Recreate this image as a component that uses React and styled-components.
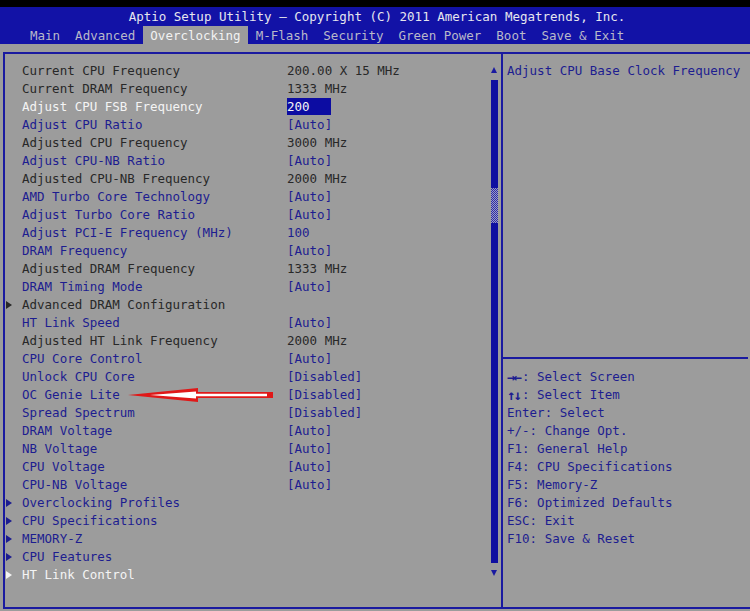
import React from 'react';
import styled, { createGlobalStyle } from 'styled-components';

const GlobalStyle = createGlobalStyle`
  html, body {
    margin: 0;
    padding: 0;
    background: #9c9c9c;
  }
  body {
    font-family: "DejaVu Sans Mono", "Liberation Mono", monospace;
    font-size: 12.5px;
  }
`;

const BLUE = '#1d1d90';
const DARK = '#282828';
const FRAME = '#1a1aa0';

const Screen = styled.div`
  width: 750px;
  height: 611px;
  background: #9c9c9c;
  display: flex;
  flex-direction: column;
  overflow: hidden;
`;

const TopStrip = styled.div`
  height: 7px;
  background: #000;
`;

const Header = styled.div`
  background: #1212a6;
  display: flex;
  flex-direction: column;
`;

const Title = styled.div`
  height: 19px;
  line-height: 20px;
  text-align: center;
  color: #e6e6ee;
  padding-left: 4px;
`;

const Tabs = styled.div`
  display: flex;
  height: 18px;
  padding-left: 22.5px;
`;

const Tab = styled.div`
  padding: 0 7.5px;
  line-height: 19px;
  color: ${p => (p.active ? '#f2f2f2' : '#b9b9c9')};
  background: ${p => (p.active ? '#9c9c9c' : 'transparent')};
  white-space: pre;
`;

const Body = styled.div`
  flex: 1;
  padding: 8px 0 2px 3px;
  display: flex;
`;

const Frame = styled.div`
  flex: 1;
  display: flex;
  border: 2px solid ${FRAME};
  border-right: none;
`;

const LeftPane = styled.div`
  width: 496px;
  display: flex;
`;

const List = styled.div`
  flex: 1;
  padding-top: 8px;
  display: flex;
  flex-direction: column;
`;

const Row = styled.div`
  position: relative;
  display: flex;
  height: 18px;
  line-height: 18px;
  white-space: pre;
`;

const Marker = styled.div`
  width: 17px;
  display: flex;
  align-items: center;
  padding-left: 1px;
  box-sizing: border-box;
`;

const Triangle = styled.span`
  width: 0;
  height: 0;
  border-left: 6px solid ${p => p.color};
  border-top: 4px solid transparent;
  border-bottom: 4px solid transparent;
`;

const Label = styled.div`
  width: 265px;
  color: ${p => p.color};
`;

const Value = styled.div`
  color: ${p => (p.editing ? '#f4f4f4' : p.color)};
  background: ${p => (p.editing ? '#0c0ca2' : 'transparent')};
  width: ${p => (p.editing ? '44px' : 'auto')};
  height: 17px;
  line-height: 17px;
`;

const Pointer = styled.svg`
  position: absolute;
  left: 123px;
  top: 1px;
`;

const Scroll = styled.div`
  width: 8px;
  margin: 13px 3px 0 0;
  display: flex;
  flex-direction: column;
  align-items: center;
`;

const ArrowUp = styled.span`
  width: 0;
  height: 0;
  border-bottom: 6px solid ${FRAME};
  border-left: 3.5px solid transparent;
  border-right: 3.5px solid transparent;
`;

const ArrowDown = styled.span`
  width: 0;
  height: 0;
  margin-top: 7px;
  border-top: 6px solid ${FRAME};
  border-left: 3.5px solid transparent;
  border-right: 3.5px solid transparent;
`;

const Track = styled.div`
  width: 7px;
  height: 483px;
  margin-top: 7px;
  background: #0f0fa0;
  display: flex;
  flex-direction: column;
`;

const Thumb = styled.div`
  margin-top: 108px;
  height: 35px;
  background: repeating-conic-gradient(#2a2aa8 0 25%, #9a9ac4 0 50%) 0 0 / 2px 2px;
`;

const RightPane = styled.div`
  flex: 1;
  border-left: 2px solid ${FRAME};
  display: flex;
  flex-direction: column;
`;

const HelpTop = styled.div`
  height: 303px;
  padding: 8px 0 0 4px;
  box-sizing: border-box;
  color: ${BLUE};
  line-height: 18px;
  white-space: pre;
`;

const Rule = styled.div`
  height: 2px;
  background: ${FRAME};
  margin-right: 2px;
`;

const Keys = styled.div`
  padding: 9px 0 0 4px;
  display: flex;
  flex-direction: column;
`;

const KeyLine = styled.div`
  display: flex;
  height: 18px;
  line-height: 18px;
  color: ${BLUE};
  white-space: pre;
`;

const KeyGlyph = styled.span`
  width: 15px;
  font-size: 14px;
  line-height: 18px;
  font-weight: bold;
  letter-spacing: -2px;
`;

const tones = { dark: DARK, blue: BLUE, white: '#f4f4f4' };

const rows = [
  { label: 'Current CPU Frequency', value: '200.00 X 15 MHz', tone: 'dark' },
  { label: 'Current DRAM Frequency', value: '1333 MHz', tone: 'dark' },
  { label: 'Adjust CPU FSB Frequency', value: '200', tone: 'white', editing: true },
  { label: 'Adjust CPU Ratio', value: '[Auto]', tone: 'blue' },
  { label: 'Adjusted CPU Frequency', value: '3000 MHz', tone: 'dark' },
  { label: 'Adjust CPU-NB Ratio', value: '[Auto]', tone: 'blue' },
  { label: 'Adjusted CPU-NB Frequency', value: '2000 MHz', tone: 'dark' },
  { label: 'AMD Turbo Core Technology', value: '[Auto]', tone: 'blue' },
  { label: 'Adjust Turbo Core Ratio', value: '[Auto]', tone: 'blue' },
  { label: 'Adjust PCI-E Frequency (MHz)', value: '100', tone: 'blue' },
  { label: 'DRAM Frequency', value: '[Auto]', tone: 'blue' },
  { label: 'Adjusted DRAM Frequency', value: '1333 MHz', tone: 'dark' },
  { label: 'DRAM Timing Mode', value: '[Auto]', tone: 'blue' },
  { label: 'Advanced DRAM Configuration', tone: 'dark', sub: true },
  { label: 'HT Link Speed', value: '[Auto]', tone: 'blue' },
  { label: 'Adjusted HT Link Frequency', value: '2000 MHz', tone: 'dark' },
  { label: 'CPU Core Control', value: '[Auto]', tone: 'blue' },
  { label: 'Unlock CPU Core', value: '[Disabled]', tone: 'blue' },
  { label: 'OC Genie Lite', value: '[Disabled]', tone: 'blue', pointer: true },
  { label: 'Spread Spectrum', value: '[Disabled]', tone: 'blue' },
  { label: 'DRAM Voltage', value: '[Auto]', tone: 'blue' },
  { label: 'NB Voltage', value: '[Auto]', tone: 'blue' },
  { label: 'CPU Voltage', value: '[Auto]', tone: 'blue' },
  { label: 'CPU-NB Voltage', value: '[Auto]', tone: 'blue' },
  { label: 'Overclocking Profiles', tone: 'blue', sub: true },
  { label: 'CPU Specifications', tone: 'blue', sub: true },
  { label: 'MEMORY-Z', tone: 'blue', sub: true },
  { label: 'CPU Features', tone: 'blue', sub: true },
  { label: 'HT Link Control', tone: 'white', sub: true },
];

const tabs = ['Main', 'Advanced', 'Overclocking', 'M-Flash', 'Security', 'Green Power', 'Boot', 'Save & Exit'];

const keys = [
  ['→←', ': Select Screen'],
  ['↑↓', ': Select Item'],
  ['', 'Enter: Select'],
  ['', '+/-: Change Opt.'],
  ['', 'F1: General Help'],
  ['', 'F4: CPU Specifications'],
  ['', 'F5: Memory-Z'],
  ['', 'F6: Optimized Defaults'],
  ['', 'ESC: Exit'],
  ['', 'F10: Save & Reset'],
];

const RedArrow = () => (
  <Pointer width="146" height="16" viewBox="0 0 146 16">
    <polygon points="0,8 70,1 70,5 145,5 145,11 70,11 70,15" fill="#e01818" />
    <polygon points="22,8 68,4.5 68,6.8 139,6.8 139,9.2 68,9.2 68,11.5" fill="#ffffff" />
  </Pointer>
);

const App = () => {
  return (
    <Screen>
      <GlobalStyle />
      <TopStrip />
      <Header>
        <Title>Aptio Setup Utility – Copyright (C) 2011 American Megatrends, Inc.</Title>
        <Tabs>
          {tabs.map(t => (
            <Tab key={t} active={t === 'Overclocking'}>{t}</Tab>
          ))}
        </Tabs>
      </Header>
      <Body>
        <Frame>
          <LeftPane>
            <List>
              {rows.map(r => (
                <Row key={r.label}>
                  <Marker>{r.sub && <Triangle color={tones[r.tone]} />}</Marker>
                  <Label color={tones[r.tone]}>{r.label}</Label>
                  {r.value && (
                    <Value color={tones[r.tone]} editing={r.editing}>{r.value}</Value>
                  )}
                  {r.pointer && <RedArrow />}
                </Row>
              ))}
            </List>
            <Scroll>
              <ArrowUp />
              <Track>
                <Thumb />
              </Track>
              <ArrowDown />
            </Scroll>
          </LeftPane>
          <RightPane>
            <HelpTop>Adjust CPU Base Clock Frequency</HelpTop>
            <Rule />
            <Keys>
              {keys.map(([g, t]) => (
                <KeyLine key={t}>
                  {g && <KeyGlyph>{g}</KeyGlyph>}
                  <span>{t}</span>
                </KeyLine>
              ))}
            </Keys>
          </RightPane>
        </Frame>
      </Body>
    </Screen>
  );
};

export default App;
